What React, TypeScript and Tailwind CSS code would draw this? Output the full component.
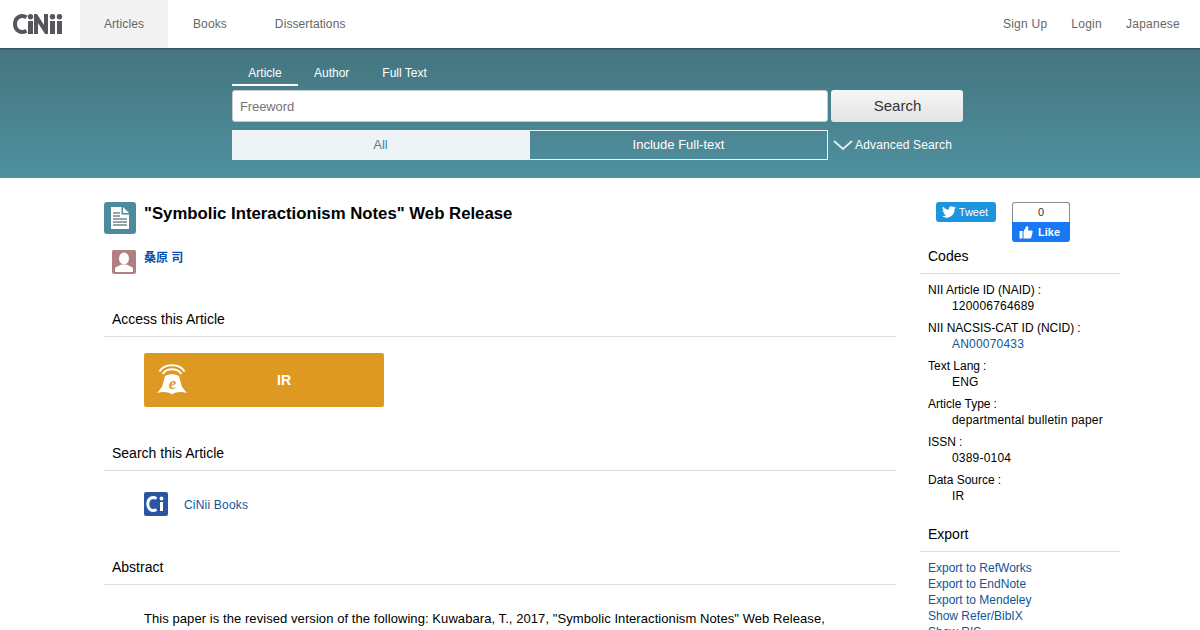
const accountLinks = ['Sign Up', 'Login', 'Japanese'];

const codes = [
  { label: 'NII Article ID (NAID)', value: '120006764689' },
  { label: 'NII NACSIS-CAT ID (NCID)', value: 'AN00070433', link: true },
  { label: 'Text Lang', value: 'ENG' },
  { label: 'Article Type', value: 'departmental bulletin paper' },
  { label: 'ISSN', value: '0389-0104' },
  { label: 'Data Source', value: 'IR' },
];

const exportLinks = ['Export to RefWorks', 'Export to EndNote', 'Export to Mendeley', 'Show Refer/BibIX', 'Show RIS'];

function SectionHead({ title, className = '' }: { title: string; className?: string }) {
  return (
    <h2 className={`border-b border-[#dddddd] pl-2 text-[14px] font-normal leading-[20px] text-black ${className}`}>
      {title}
    </h2>
  );
}

function Logo() {
  return (
    <div className="flex h-[48px] w-[80px] items-center pl-[13px]">
      <svg width="50" height="22" viewBox="0 0 50 22" fill="none">
        <path d="M13.500 4.300C8 1 2 4.500 2 11s6 10 11.500 6.700" stroke="#55575b" strokeWidth="4" />
        <rect x="15" y="8" width="5" height="13" fill="#55575b" />
        <circle cx="17.500" cy="3.800" r="2.700" fill="#55575b" />
        <path d="M21 21V1h3l7 11V1h4v20h-3l-7-11v11z" fill="#55575b" />
        <rect x="37" y="8" width="5" height="13" fill="#55575b" />
        <circle cx="39.500" cy="3.800" r="2.700" fill="#55575b" />
        <rect x="44" y="8" width="5" height="13" fill="#55575b" />
        <circle cx="46.500" cy="3.800" r="2.700" fill="#55575b" />
      </svg>
    </div>
  );
}

function ArticleIcon() {
  return (
    <div className="flex h-[32px] w-[32px] shrink-0 items-center justify-center rounded-[3px] bg-[#4b8b9c]">
      <svg width="20" height="24" viewBox="0 0 20 24">
        <path d="M1 1h10.500v7.500H19V23H1z" fill="#fff" />
        <path d="M13 1l6 6h-6z" fill="#fff" />
        <path d="M3 7h7M3 10h7M3 13h14M3 16h14M3 19h14" stroke="#2f4a54" strokeWidth="1" />
      </svg>
    </div>
  );
}

function PersonIcon() {
  return (
    <div className="flex h-[24px] w-[24px] shrink-0 items-center justify-center rounded-[2px] bg-[#b07f7f]">
      <svg width="20" height="20" viewBox="0 0 20 20" fill="#fff">
        <ellipse cx="10" cy="6.500" rx="5" ry="6" />
        <path d="M1 20v-3c0-2.500 4-3 6.500-4.500h5c2.500 1.500 6.500 2 6.500 4.500v3z" />
      </svg>
    </div>
  );
}

function IrIcon() {
  return (
    <svg width="32" height="34" viewBox="0 0 32 34" className="shrink-0 -translate-y-[1px]">
      <path d="M3.500 9.500C8 1 24 1 28.500 9.500" fill="none" stroke="#fff" strokeWidth="2" />
      <path d="M6.500 12C11 5.500 21 5.500 25.500 12" fill="none" stroke="#fff" strokeWidth="2" />
      <path d="M9 14c4-2.500 10-2.500 14 0l3 11 5 6c-5-1.500-11-1.500-15 1.500-4-3-10-3-15-1.500l5-6z" fill="#fff" />
      <text x="16.500" y="27" textAnchor="middle" fontFamily="Liberation Serif, serif" fontStyle="italic" fontWeight="700" fontSize="17" fill="#dd9922">e</text>
    </svg>
  );
}

function CiniiBooksIcon() {
  return (
    <div className="flex h-[24px] w-[24px] items-center justify-center rounded-[2px] bg-[#2b559f]">
      <svg width="20" height="18" viewBox="0 0 20 18" fill="none">
        <path d="M10.500 3.500C6 1 1.800 3.800 1.800 9s4.200 8 8.700 5.500" stroke="#fff" strokeWidth="3" />
        <rect x="14" y="7" width="3" height="9" fill="#fff" />
        <circle cx="15.500" cy="3.500" r="1.900" fill="#fff" />
      </svg>
    </div>
  );
}

export default function App() {
  return (
    <div className="h-[630px] w-[1200px] overflow-hidden bg-white font-['Liberation_Sans','Noto_Sans_CJK_JP',sans-serif] text-[12px] text-black">
      {/* Top nav */}
      <header className="relative z-10 flex h-[48px] items-center justify-between bg-white text-[#666666] shadow-[0_1px_2px_rgba(0,0,0,0.35)]">
        <div className="flex h-full items-center tracking-[0.1px]">
          <Logo />
          <a className="flex h-full w-[88px] items-center justify-center bg-[#f3f3f3]">Articles</a>
          <a className="ml-[25px]">Books</a>
          <a className="ml-[48px]">Dissertations</a>
        </div>
        <div className="flex items-center gap-[24px] pr-[20px] tracking-[0.25px]">
          {accountLinks.map((link) => (
            <a key={link}>{link}</a>
          ))}
        </div>
      </header>

      {/* Search band */}
      <section className="h-[130px] bg-gradient-to-b from-[#44757f] to-[#4f909f] pl-[232px] pt-[16px]">
        <div className="flex h-[22px] text-white">
          <span className="flex h-[22px] w-[66px] items-start justify-center border-b-2 border-white">Article</span>
          <span className="ml-[16px]">Author</span>
          <span className="ml-[33px]">Full Text</span>
        </div>
        <div className="mt-[4px] flex gap-[3px]">
          <div className="flex h-[32px] w-[596px] items-center rounded-[3px] border border-[#c4ccd0] bg-white pl-[7px] pt-[2px] text-[13px] tracking-[-0.1px] text-[#757575]">
            Freeword
          </div>
          <button className="flex h-[32px] w-[132px] items-center justify-center rounded-[3px] bg-gradient-to-b from-[#f6f6f6] to-[#e3e3e3] pl-[1px] text-[15px] text-[#333333]">
            Search
          </button>
        </div>
        <div className="mt-[8px] flex h-[30px] items-center">
          <div className="flex h-full w-[297px] items-center justify-center bg-[#eef3f5] text-[13px] text-[#4a8595]">All</div>
          <div className="flex h-full w-[299px] items-center justify-center border border-[#eef3f5] text-[13px] text-white">Include Full-text</div>
          <svg width="20" height="12" viewBox="0 0 20 12" className="ml-[5px] mr-[2px]">
            <path d="M1 2l9 8 9-8" fill="none" stroke="#e4eef1" strokeWidth="1.800" />
          </svg>
          <span className="tracking-[0.15px] text-white">Advanced Search</span>
        </div>
      </section>

      <div className="flex pl-[104px]">
        {/* Main column */}
        <main className="w-[792px]">
          <div className="mt-[24px] flex gap-[8px]">
            <ArticleIcon />
            <h1 className="pt-[1px] text-[16.75px] font-bold leading-[22px]">"Symbolic Interactionism Notes" Web Release</h1>
          </div>
          <div className="mt-[16px] flex gap-[8px] pl-[8px]">
            <PersonIcon />
            <a className="pt-[1px] text-[12px] font-bold leading-[15px] text-[#0a50a8]">桑原 司</a>
          </div>

          <SectionHead title="Access this Article" className="mt-[35px] pb-[7px]" />
          <div className="ml-[40px] mt-[16px] flex h-[54px] w-[240px] items-center rounded-[2px] bg-[#dd9922] pl-[12px]">
            <IrIcon />
            <span className="ml-[89px] text-[14px] font-bold text-white">IR</span>
          </div>

          <SectionHead title="Search this Article" className="mt-[36px] pb-[7px]" />
          <div className="ml-[40px] mt-[21px] flex items-center gap-[16px]">
            <CiniiBooksIcon />
            <a className="pt-[2px] tracking-[0.2px] text-[#115599]">CiNii Books</a>
          </div>

          <SectionHead title="Abstract" className="mt-[41px] pb-[7px]" />
          <p className="ml-[40px] mt-[25px] text-[13px] leading-[18px] tracking-[0.07px]">
            This paper is the revised version of the following: Kuwabara, T., 2017, "Symbolic Interactionism Notes" Web Release,
          </p>
        </main>

        {/* Sidebar */}
        <aside className="ml-[24px] w-[200px]">
          <div className="ml-[16px] mt-[24px] flex items-start gap-[16px]">
            <div className="flex h-[20px] w-[60px] items-center justify-center gap-[3px] rounded-[3px] bg-[#1b95e0] pr-[2px] text-[11px] text-white">
              <svg width="14" height="12" viewBox="0 0 24 20" fill="#fff">
                <path d="M24 2.400a9.800 9.800 0 0 1-2.800.8A4.900 4.900 0 0 0 23.300.500a9.800 9.800 0 0 1-3.100 1.200 4.900 4.900 0 0 0-8.400 4.500A14 14 0 0 1 1.700.900a4.900 4.900 0 0 0 1.500 6.600 4.900 4.900 0 0 1-2.200-.6 4.900 4.900 0 0 0 3.900 4.900 4.900 4.900 0 0 1-2.200.1 4.900 4.900 0 0 0 4.600 3.400A9.900 9.900 0 0 1 0 17.300 14 14 0 0 0 21.500 4.900a10 10 0 0 0 2.500-2.500z" />
              </svg>
              Tweet
            </div>
            <div className="w-[58px]">
              <div className="flex h-[20px] items-center justify-center rounded-t-[3px] border border-b-0 border-[#8a8a8a] text-[11px] text-[#333333]">0</div>
              <div className="flex h-[20px] items-center justify-center gap-[5px] rounded-b-[3px] bg-[#1877f2] pr-[3px] text-[11px] font-bold text-white">
                <svg width="14" height="14" viewBox="0 0 14 14" fill="#fff">
                  <rect x="0.500" y="6" width="3" height="7.500" />
                  <path d="M4.500 6.500L7.500 1c1.500 0 2 1 1.800 2.200L9 5.500h3.500c1 0 1.300.8 1.100 1.500l-1.300 5.500c-.2.700-.6 1-1.300 1H4.500z" />
                </svg>
                Like
              </div>
            </div>
          </div>

          <SectionHead title="Codes" className="mt-[4px] pb-[7px]" />
          <dl className="mt-[8px] pl-[8px]">
            {codes.map((code) => (
              <div key={code.label} className="mb-[6px] leading-[16px]">
                <dt>{code.label}<span className="ml-[3px]">:</span></dt>
                <dd className={`pl-[24px] tracking-[0.2px] ${code.link ? 'text-[#115599]' : ''}`}>{code.value}</dd>
              </div>
            ))}
          </dl>

          <SectionHead title="Export" className="mt-[20px] pb-[7px]" />
          <ul className="mt-[8px] pl-[8px] leading-[16px] text-[#115599]">
            {exportLinks.map((link) => (
              <li key={link}>{link}</li>
            ))}
          </ul>
        </aside>
      </div>
    </div>
  );
}
